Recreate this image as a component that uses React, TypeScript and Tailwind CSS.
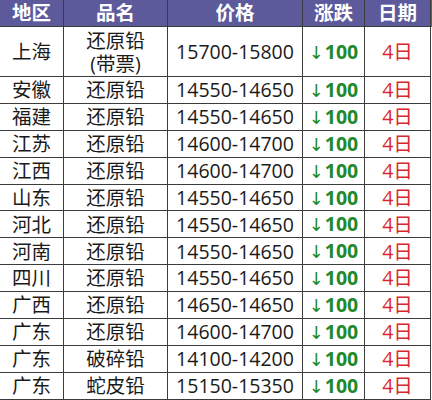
import React from "react";

const rows: [string, string, string][] = [
  ["安徽", "还原铅", "14550-14650"],
  ["福建", "还原铅", "14550-14650"],
  ["江苏", "还原铅", "14600-14700"],
  ["江西", "还原铅", "14600-14700"],
  ["山东", "还原铅", "14550-14650"],
  ["河北", "还原铅", "14550-14650"],
  ["河南", "还原铅", "14550-14650"],
  ["四川", "还原铅", "14550-14650"],
  ["广西", "还原铅", "14650-14650"],
  ["广东", "还原铅", "14600-14700"],
  ["广东", "破碎铅", "14100-14200"],
  ["广东", "蛇皮铅", "15150-15350"],
];

const cell = "flex items-center justify-center border-r border-b border-[#3c3c3c]";
const grid = "grid grid-cols-[64px_104px_135px_62px_66px]";

function Change() {
  return (
    <span className="text-[#1f8a2c] flex items-baseline">
      <span className="font-normal text-[18px] mr-[1px]" style={{ fontFamily: '"DejaVu Sans", sans-serif' }}>↓</span>
      <span className="font-bold">100</span>
    </span>
  );
}

export default function App() {
  return (
    <div
      className="w-[432px] h-[400px] overflow-hidden bg-white text-[19.5px] text-[#1a1a1a]"
      style={{ fontFamily: '"Open Sans", "Noto Sans CJK SC", sans-serif' }}
    >
      <div className={`${grid} h-[27px] bg-[#5d5a9c] text-white font-bold leading-none`}>
        {["地区", "品名", "价格", "涨跌", "日期"].map((h) => (
          <div key={h} className="flex items-center justify-center border-r border-b border-[#3c3c3c]">
            {h}
          </div>
        ))}
      </div>
      <div className={`${grid} h-[50px] leading-none`}>
        <div className={cell}>上海</div>
        <div className={`${cell} flex-col`}>
          <span className="leading-[23px]">还原铅</span>
          <span className="leading-[23px]">(带票)</span>
        </div>
        <div className={cell}>15700-15800</div>
        <div className={cell}>
          <Change />
        </div>
        <div className={`${cell} text-[#d8282f]`}>4日</div>
      </div>
      {rows.map(([a, b, c], i) => (
        <div key={i} className={`${grid} h-[26.9px] leading-none`}>
          <div className={cell}>{a}</div>
          <div className={cell}>{b}</div>
          <div className={cell}>{c}</div>
          <div className={cell}>
            <Change />
          </div>
          <div className={`${cell} text-[#d8282f]`}>4日</div>
        </div>
      ))}
    </div>
  );
}
